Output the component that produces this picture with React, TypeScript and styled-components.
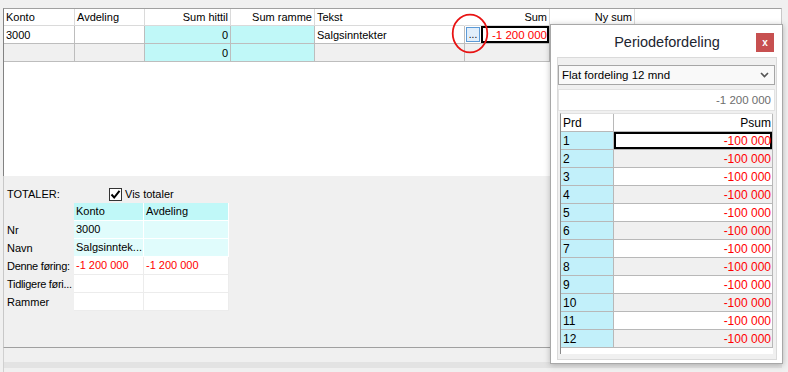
import React from 'react';
import styled, { createGlobalStyle } from 'styled-components';

const GlobalStyle = createGlobalStyle`
  html, body { margin: 0; padding: 0; background: #f0f0f0; }
  body { font-family: "Liberation Sans", Arial, sans-serif; font-size: 11px; color: #000; }
  * { box-sizing: border-box; }
`;

const CYAN = '#c0f8f8';
const CYAN_LIGHT = '#e0fcfc';
const PRD_CYAN = '#c2f0fa';
const ROW_GRAY = '#f0f0f0';
const RED = '#ff0000';

const Page = styled.div`
  position: relative;
  width: 788px;
  height: 372px;
  overflow: hidden;
  padding-top: 8px;
  display: flex;
  flex-direction: column;
`;

const MainWindow = styled.div`
  margin-left: 3px;
  width: 779px;
  flex: 1;
  display: flex;
  flex-direction: column;
`;

const Grid = styled.div`
  height: 168px;
  flex: none;
  background: #fff;
  border-top: 1px solid #a0a0a0;
  border-left: 1px solid #828282;
  border-right: 1px solid #c8c8c8;
`;

const Row = styled.div<{ $h: number }>`
  display: flex;
  height: ${(p) => p.$h}px;
`;

const Cell = styled.div<{ $w: number; $bg: string; $right?: boolean; $line: string; $noSep?: boolean }>`
  width: ${(p) => p.$w}px;
  flex: none;
  background: ${(p) => p.$bg};
  border-right: 1px solid ${(p) => (p.$noSep ? p.$bg : p.$line)};
  border-bottom: 1px solid ${(p) => p.$line};
  padding: 0 2px;
  display: flex;
  align-items: center;
  justify-content: ${(p) => (p.$right ? 'flex-end' : 'flex-start')};
  white-space: nowrap;
  overflow: hidden;
`;

const SumCell = styled.div`
  width: 85px;
  flex: none;
  display: flex;
  align-items: stretch;
  gap: 1px;
  padding-left: 1px;
  border-right: 1px solid #bdbdbd;
  border-bottom: 1px solid #bdbdbd;
  background: #fff;
`;

const DotsButton = styled.div`
  width: 14px;
  margin: 1px 0;
  background: #e1eefb;
  border: 1px solid #5c9ad6;
  display: flex;
  align-items: flex-end;
  justify-content: center;
  font-size: 10px;
  line-height: 10px;
  padding-bottom: 1px;
`;

const Editor = styled.div`
  flex: 1;
  border: 2px solid #000;
  background: #fff;
  color: ${RED};
  display: flex;
  align-items: center;
  justify-content: flex-end;
  white-space: nowrap;
  font-size: 11.5px;
`;

const TotalsPanel = styled.div`
  height: 171px;
  flex: none;
  border-left: 1px solid #c8c8c8;
  padding: 10px 0 0 3px;
`;

const TotalsHead = styled.div`
  display: flex;
  align-items: center;
  height: 16px;
  margin-bottom: 1px;
`;

const TotalsTitle = styled.div`
  width: 102px;
`;

const CheckBox = styled.div`
  width: 13px;
  height: 13px;
  border: 1px solid #333;
  background: #fff;
  display: flex;
  align-items: center;
  justify-content: center;
  margin-right: 3px;
`;

const TotalsTable = styled.div`
  display: grid;
  grid-template-columns: 67px 70px 85px;
  grid-auto-rows: 18px;
`;

const TLabel = styled.div<{ $tight?: boolean }>`
  display: flex;
  align-items: center;
  white-space: nowrap;
  padding-bottom: 1px;
  letter-spacing: ${(p) => (p.$tight ? '-0.3px' : 'normal')};
`;

const TCell = styled.div<{ $bg: string; $line: string; $red?: boolean }>`
  background: ${(p) => p.$bg};
  border-right: 1px solid ${(p) => p.$line};
  border-bottom: 1px solid ${(p) => p.$line};
  color: ${(p) => (p.$red ? RED : '#000')};
  padding: 0 1px 0 2px;
  line-height: 17px;
  white-space: nowrap;
`;

const StatusBar = styled.div`
  flex: 1;
  border-top: 1px solid #a0a0a0;
  border-left: 1px solid #d0d0d0;
  display: flex;
  flex-direction: column;
`;

const StatusBody = styled.div`
  height: 14px;
`;

const StatusEdge = styled.div`
  height: 6px;
  background: #e3e3e3;
`;

const Annotation = styled.svg`
  position: absolute;
  left: 451px;
  top: 13px;
`;

const Dialog = styled.div`
  position: absolute;
  left: 550px;
  top: 24px;
  width: 233px;
  height: 340px;
  background: #fff;
  border: 1px solid #a8a8a8;
  box-shadow: 0 1px 6px rgba(0, 0, 0, 0.25);
  display: flex;
  flex-direction: column;
  padding: 0 5px 3px 6px;
`;

const TitleBar = styled.div`
  height: 32px;
  flex: none;
  display: flex;
  align-items: center;
  padding: 2px 0 0 21px;
`;

const Title = styled.div`
  flex: 1;
  text-align: center;
  font-size: 14.5px;
  color: #1c2530;
`;

const CloseButton = styled.div`
  width: 18px;
  height: 19px;
  margin-right: 3px;
  background: #c75050;
  color: #fff;
  font-weight: bold;
  font-size: 10px;
  display: flex;
  align-items: center;
  justify-content: center;
`;

const DialogPanel = styled.div`
  flex: 1;
  background: #f0f0f0;
  border: 1px solid #dadada;
  padding: 7px 1px 0 0;
  display: flex;
  flex-direction: column;
`;

const Combo = styled.div`
  height: 20px;
  border: 1px solid #a6a6a6;
  background: #f9f9f9;
  display: flex;
  align-items: center;
  justify-content: space-between;
  padding: 0 5px 0 3px;
  font-size: 11.5px;
`;

const TotalField = styled.div`
  height: 22px;
  margin-top: 4px;
  background: #fff;
  border: 1px solid #e2e2e2;
  color: #6d6d6d;
  display: flex;
  align-items: center;
  justify-content: flex-end;
  padding-right: 3px;
  font-size: 11.5px;
`;

const PeriodGrid = styled.div`
  margin: 2px 2px 5px 2px;
  flex: 1;
  background: #fff;
  border-left: 1px solid #8a8a8a;
  border-top: 1px solid #e0e0e0;
  width: 213px;
`;

const PCell = styled.div<{ $w: number; $bg: string; $right?: boolean; $sel?: boolean; $red?: boolean }>`
  width: ${(p) => p.$w}px;
  flex: none;
  background: ${(p) => p.$bg};
  border-right: 1px solid #b8b8b8;
  border-bottom: 1px solid #b8b8b8;
  color: ${(p) => (p.$red ? RED : '#000')};
  display: flex;
  align-items: center;
  justify-content: ${(p) => (p.$right ? 'flex-end' : 'flex-start')};
  padding: 0 1px 0 2px;
  font-size: 12px;
  box-shadow: ${(p) => (p.$sel ? 'inset 0 0 0 2px #000' : 'none')};
  white-space: nowrap;
`;

type Col = { w: number; label: string; right?: boolean; noSep?: boolean };
const columns: Col[] = [
  { w: 71, label: 'Konto' },
  { w: 70, label: 'Avdeling' },
  { w: 86, label: 'Sum hittil', right: true },
  { w: 84, label: 'Sum ramme', right: true },
  { w: 150, label: 'Tekst', noSep: true },
  { w: 85, label: 'Sum', right: true },
  { w: 85, label: 'Ny sum', right: true },
];

const ROW_LINE = '#bdbdbd';
const HEAD_LINE = '#dadada';

const periods = Array.from({ length: 12 }, (_, i) => i + 1);

export default function App() {
  return (
    <>
      <GlobalStyle />
      <Page>
        <MainWindow>
          <Grid>
            <Row $h={17}>
              {columns.map((c) => (
                <Cell key={c.label} $w={c.w} $bg="#fff" $line={HEAD_LINE} $right={c.right} $noSep={c.noSep}>
                  {c.label}
                </Cell>
              ))}
            </Row>
            <Row $h={18}>
              <Cell $w={71} $bg="#fff" $line={ROW_LINE}>3000</Cell>
              <Cell $w={70} $bg="#fff" $line={ROW_LINE} />
              <Cell $w={86} $bg={CYAN} $line={ROW_LINE} $right>0</Cell>
              <Cell $w={84} $bg={CYAN} $line={ROW_LINE} />
              <Cell $w={150} $bg="#fff" $line={ROW_LINE}>Salgsinntekter</Cell>
              <SumCell>
                <DotsButton>...</DotsButton>
                <Editor>-1 200 000</Editor>
              </SumCell>
              <Cell $w={85} $bg="#fff" $line={ROW_LINE} />
            </Row>
            <Row $h={18}>
              <Cell $w={71} $bg={ROW_GRAY} $line={ROW_LINE} />
              <Cell $w={70} $bg={ROW_GRAY} $line={ROW_LINE} />
              <Cell $w={86} $bg={CYAN} $line={ROW_LINE} $right>0</Cell>
              <Cell $w={84} $bg={CYAN} $line={ROW_LINE} />
              <Cell $w={150} $bg={ROW_GRAY} $line={ROW_LINE} />
              <Cell $w={85} $bg={ROW_GRAY} $line={ROW_LINE} />
              <Cell $w={85} $bg={ROW_GRAY} $line={ROW_LINE} />
            </Row>
          </Grid>
          <TotalsPanel>
            <TotalsHead>
              <TotalsTitle>TOTALER:</TotalsTitle>
              <CheckBox>
                <svg width="11" height="11" viewBox="0 0 11 11">
                  <path d="M1.5 5.5 L4.2 8.5 L9.5 1.8" fill="none" stroke="#000" strokeWidth="2" />
                </svg>
              </CheckBox>
              <span>Vis totaler</span>
            </TotalsHead>
            <TotalsTable>
              <TLabel />
              <TCell $bg={CYAN} $line="#fff">Konto</TCell>
              <TCell $bg={CYAN} $line="#fff">Avdeling</TCell>

              <TLabel>Nr</TLabel>
              <TCell $bg={CYAN_LIGHT} $line="#fff">3000</TCell>
              <TCell $bg={CYAN_LIGHT} $line="#fff" />

              <TLabel>Navn</TLabel>
              <TCell $bg={CYAN_LIGHT} $line="#fff">Salgsinntek...</TCell>
              <TCell $bg={CYAN_LIGHT} $line="#fff" />

              <TLabel $tight>Denne føring:</TLabel>
              <TCell $bg="#fff" $line="#ececec" $red>-1 200 000</TCell>
              <TCell $bg="#fff" $line="#ececec" $red>-1 200 000</TCell>

              <TLabel $tight>Tidligere føri...</TLabel>
              <TCell $bg="#fff" $line="#ececec" />
              <TCell $bg="#fff" $line="#ececec" />

              <TLabel>Rammer</TLabel>
              <TCell $bg="#fff" $line="#ececec" />
              <TCell $bg="#fff" $line="#ececec" />
            </TotalsTable>
          </TotalsPanel>
          <StatusBar>
            <StatusBody />
            <StatusEdge />
          </StatusBar>
        </MainWindow>

        <Annotation width="38" height="41" viewBox="0 0 38 41">
          <ellipse cx="19" cy="20.5" rx="17.3" ry="18.8" fill="none" stroke="#e81313" strokeWidth="1.8" />
        </Annotation>

        <Dialog>
          <TitleBar>
            <Title>Periodefordeling</Title>
            <CloseButton>x</CloseButton>
          </TitleBar>
          <DialogPanel>
            <Combo>
              <span>Flat fordeling 12 mnd</span>
              <svg width="9" height="6" viewBox="0 0 9 6">
                <path d="M1 1 L4.5 4.5 L8 1" fill="none" stroke="#555" strokeWidth="1.6" />
              </svg>
            </Combo>
            <TotalField>-1 200 000</TotalField>
            <PeriodGrid>
              <Row $h={18}>
                <PCell $w={53} $bg="#fff">Prd</PCell>
                <PCell $w={159} $bg="#fff" $right>Psum</PCell>
              </Row>
              {periods.map((n) => (
                <Row $h={18} key={n}>
                  <PCell $w={53} $bg={PRD_CYAN}>{n}</PCell>
                  <PCell $w={159} $bg={n % 2 === 1 ? '#fff' : ROW_GRAY} $right $red $sel={n === 1}>
                    -100 000
                  </PCell>
                </Row>
              ))}
            </PeriodGrid>
          </DialogPanel>
        </Dialog>
      </Page>
    </>
  );
}
